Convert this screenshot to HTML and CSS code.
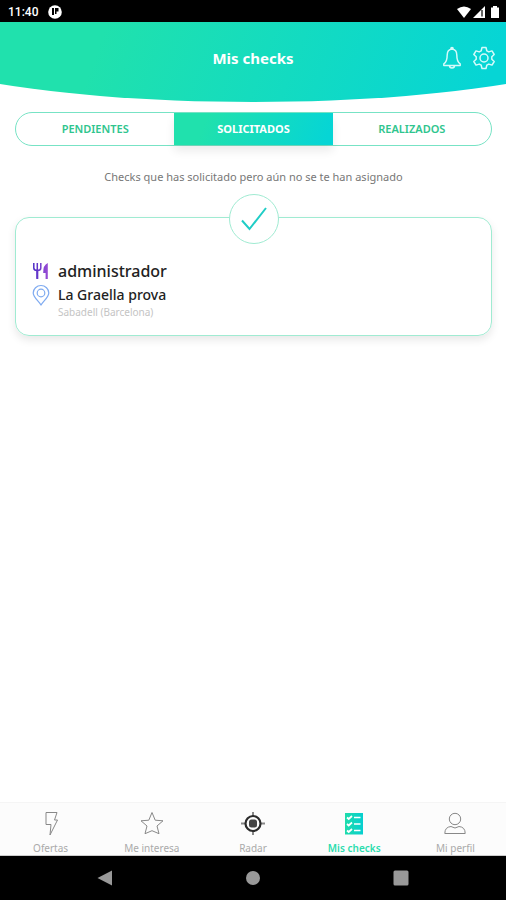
FILE: index.html
```html
<!DOCTYPE html>
<html lang="es">
<head>
<meta charset="utf-8">
<meta name="viewport" content="width=device-width, initial-scale=1">
<title>Mis checks</title>
<link rel="stylesheet" href="styles.css">
</head>
<body>
<div class="status">
  <span class="clock">11:40</span>
  <svg width="14" height="14" viewBox="0 0 14 14"><circle cx="7" cy="7" r="6.800" fill="#fff"/><path d="M4 3h2v7H4ZM7 3h3.500v3.500H8.500V9H7Z" fill="#000"/></svg>
  <svg class="signals" width="44" height="14" viewBox="0 0 44 14">
    <path d="M1 4Q8 -1 15 4L8 13Z" fill="#fff"/>
    <path d="M29 1V13H17Z" fill="#fff"/><path d="M26 5v6.500" stroke="#000" stroke-width="1.200"/>
    <path d="M37 1h4v1.500h2V13h-8V2.500h2Z" fill="#fff"/>
  </svg>
</div>
<header class="header">
  <h1>Mis checks</h1>
  <div class="actions">
    <button aria-label="Notificaciones"><svg width="24" height="24" viewBox="0 0 24 24"><path d="M12 3c-3 .3-4.800 2.700-4.800 6 0 5-.7 7.300-3.400 8.800V19.500h16.400V17.800c-2.700-1.500-3.400-3.800-3.400-8.800 0-3.300-1.800-5.700-4.800-6ZM10.800 3a1.200 1.500 0 0 1 2.400 0M9.500 19.500a2.500 2.500 0 0 0 5 0"/></svg></button>
    <button aria-label="Ajustes"><svg width="24" height="24" viewBox="0 0 24 24"><path d="M10 1.500h4l.8 3.300 2 1.100 3.200-1 2.200 3.600-2.400 2.300v2.400l2.400 2.300-2.200 3.600-3.200-1-2 1.100-.8 3.300h-4l-.8-3.300-2-1.100-3.200 1-2.200-3.600 2.400-2.300v-2.400L1.800 8.500 4 4.900l3.200 1 2-1.100Z"/><circle cx="12" cy="12" r="4"/></svg></button>
  </div>
</header>
<main>
  <div class="tabs">
    <button>PENDIENTES</button>
    <button class="active">SOLICITADOS</button>
    <button>REALIZADOS</button>
  </div>
  <p class="hint">Checks que has solicitado pero aún no se te han asignado</p>
  <article class="card">
    <div class="badge"><svg width="28" height="28" viewBox="0 0 28 28"><path d="M2 15.500L9.500 24L26 3" fill="none" stroke="#20cdc6" stroke-width="2"/></svg></div>
    <svg class="icon" width="18" height="18" viewBox="0 0 18 18"><defs><linearGradient id="violet" gradientUnits="userSpaceOnUse" x1="1" y1="0" x2="17" y2="0"><stop offset="0" stop-color="#4b2cc4"/><stop offset="1" stop-color="#a04fd6"/></linearGradient></defs><path d="M1.800 1v5q0 2.500 3.500 2.500T8.800 6V1M5.300 1v15.500" fill="none" stroke="url(#violet)" stroke-width="1.500"/><path d="M4.300 8h2v9h-2ZM15.800 1v16h-2.200v-6h-2.400Q11 3 15.800 1Z" fill="url(#violet)"/></svg>
    <h2>administrador</h2>
    <svg class="icon" width="18" height="22" viewBox="0 0 18 22"><path d="M9 21C6 16.500 1.200 13 1.200 9a7.800 7.500 0 0 1 15.600 0C16.800 13 12 16.500 9 21Z" fill="none" stroke="#7eaaf0" stroke-width="1.200"/><circle cx="9" cy="9" r="3.800" fill="none" stroke="#7eaaf0" stroke-width="1.200"/></svg>
    <h3>La Graella prova</h3>
    <p class="place">Sabadell (Barcelona)</p>
  </article>
</main>
<nav class="menu">
  <a href="#ofertas"><svg width="26" height="26" viewBox="0 0 26 26"><path d="M8 1.500h11l-2.500 7.500h3l-7.500 15 1-10.500H8Z"/></svg>Ofertas</a>
  <a href="#interesa"><svg width="26" height="26" viewBox="0 0 26 26"><path d="M13 1.500l3.200 7.700 7.800.6-6 5.200 2 7.700-7-3-7 3 2-7.700-6-5.200 7.800-.6Z"/></svg>Me interesa</a>
  <a href="#radar"><svg width="26" height="26" viewBox="0 0 26 26"><path d="M13 1v5M13 19v5M1 12.500h5M20 12.500h5" stroke="#888" stroke-width="2"/><circle cx="13" cy="12.500" r="7.500" stroke="#2c2c2c" stroke-width="2.200"/><rect x="9" y="8.500" width="8" height="8" rx="2.500" fill="#444" stroke="none"/></svg>Radar</a>
  <a href="#checks" class="current"><svg width="26" height="26" viewBox="0 0 26 26"><defs><linearGradient id="mint"><stop offset="0" stop-color="#1fdcab"/><stop offset="1" stop-color="#06cfd0"/></linearGradient></defs><path d="M4 2h18v21.500H4Z" fill="url(#mint)" stroke="none"/><path d="M6 6.500L7.700 8 11 5M6 13L7.700 14.500 11 11.500M6 19.500L7.700 21 11 18M13 6.500h6.500M13 13h6.500M13 19.500h6.500" stroke="#fff" stroke-width="1.700"/></svg>Mis checks</a>
  <a href="#perfil"><svg width="26" height="26" viewBox="0 0 26 26"><circle cx="13" cy="8" r="5.700"/><path d="M2.800 22.500q0-6.500 6.200-7l4 1.500 4-1.500q6.200.5 6.200 7Z"/></svg>Mi perfil</a>
</nav>
<div class="system">
  <button aria-label="Atrás"><svg width="16" height="16" viewBox="0 0 16 16"><path d="M15 0.500v15L0.500 8Z"/></svg></button>
  <button aria-label="Inicio"><svg width="16" height="16" viewBox="0 0 16 16"><circle cx="8" cy="8" r="7"/></svg></button>
  <button aria-label="Recientes"><svg width="16" height="16" viewBox="0 0 16 16"><rect x="0.500" y="0.500" width="15" height="15" rx="1.500"/></svg></button>
</div>
</body>
</html>
```
FILE: styles.css
```css
* { box-sizing: border-box; }
body {
  margin: 0;
  min-height: 100vh;
  display: flex;
  flex-direction: column;
  background: #fff;
  font-family: "Noto Sans", "Open Sans", sans-serif;
}
h1, h2, h3, p { margin: 0; }
button {
  padding: 0;
  border: 0;
  background: none;
  font: inherit;
}
svg { display: block; }
.status {
  display: flex;
  align-items: center;
  gap: 10px;
  height: 22px;
  padding: 2px 6px 0 8px;
  background: #000;
  color: #fff;
}
.clock {
  font: 500 12px/16px Roboto, sans-serif;
}
.signals { margin-left: auto; }
.header {
  display: grid;
  grid-template-columns: 1fr auto 1fr;
  align-items: center;
  height: 80px;
  padding: 0 10px 8px;
  background: linear-gradient(110deg, #20e1ad 20%, #06d5d5 95%);
  clip-path: ellipse(79% 100% at 50% 0);
}
.header h1 {
  grid-column: 2;
  color: #fff;
  font-size: 15px;
  line-height: 20px;
  font-weight: 700;
}
.actions {
  display: flex;
  justify-content: flex-end;
  gap: 8px;
}
.actions svg {
  fill: none;
  stroke: #d4fafa;
  stroke-width: 1.5;
  stroke-linejoin: round;
}
main {
  flex: 1;
  padding: 10px 14px 10px 15px;
}
.tabs {
  display: grid;
  grid-template-columns: repeat(3, 1fr);
  height: 34px;
  border: 1px solid #77e3c5;
  border-radius: 17px;
}
.tabs button {
  padding-bottom: 2px;
  color: #2fc58e;
  font-size: 11px;
  font-weight: 600;
}
.tabs .active {
  background: linear-gradient(110deg, #20e1ad 20%, #06d5d5 95%);
  box-shadow: 0 6px 10px #00000014;
  color: #fff;
  font-weight: 700;
}
.hint {
  margin-top: 22px;
  color: #777;
  font-size: 11px;
  line-height: 18px;
  text-align: center;
}
.card {
  position: relative;
  display: grid;
  grid-template-columns: 18px 1fr;
  column-gap: 8px;
  margin-top: 31px;
  padding: 41px 16px 18px;
  border: 1px solid #a0ebd2;
  border-radius: 14px;
  box-shadow: 0 4px 8px #00000018;
}
.badge {
  position: absolute;
  top: -24px;
  left: 50%;
  display: grid;
  place-items: center;
  width: 50px;
  height: 50px;
  border: 1px solid #a0ebd2;
  border-radius: 50%;
  background: #fff;
  transform: translateX(-50%);
}
.icon { align-self: center; }
.card h2, .card h3 {
  color: #222;
  font-weight: 500;
}
.card h2 {
  font-size: 16px;
  line-height: 24px;
}
.card h3 {
  font-size: 14px;
  line-height: 24px;
}
.place {
  grid-column: 2;
  color: #c4c4c4;
  font-size: 10px;
  line-height: 10px;
}
.menu {
  display: grid;
  grid-template-columns: repeat(5, 1fr);
  height: 54px;
  padding-top: 8px;
  border-top: 1px solid #f5f5f5;
  border-bottom: 1px solid #ccc;
  background: #fcfcfc;
}
.menu a {
  display: flex;
  flex-direction: column;
  align-items: center;
  gap: 4px;
  color: #aaa;
  font-size: 10px;
  line-height: 14px;
  text-decoration: none;
}
.menu svg {
  fill: none;
  stroke: #888;
  stroke-width: 1;
}
.menu .current {
  color: #2bdcae;
  font-weight: 600;
}
.system {
  display: flex;
  justify-content: center;
  align-items: center;
  gap: 132px;
  height: 44px;
  background: #000;
}
.system svg { fill: #999; }
```
